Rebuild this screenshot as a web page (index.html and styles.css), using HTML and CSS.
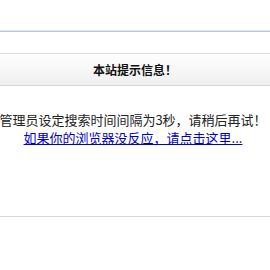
FILE: index.html
```html
<!DOCTYPE html>
<html lang="zh-CN">
<head>
  <meta charset="UTF-8" />
  <meta name="viewport" content="width=device-width, initial-scale=1.0" />
  <title>提示信息</title>
  <link rel="stylesheet" href="styles.css">
</head>
<body>
  <div class="topbar"></div>
  <div class="wrap">
    <div class="box">
      <h3 class="box-title">本站提示信息！</h3>
      <div class="box-body">
        <p class="msg"><span>管理员设定搜索时间间隔为3秒，请稍后再试！</span></p>
        <p class="msg"><a href="#">如果你的浏览器没反应，请点击这里...</a></p>
      </div>
    </div>
  </div>
  <div class="footer"></div>
</body>
</html>
```

FILE: styles.css
```css
body {
  margin: 0;
  font-family: "Noto Sans CJK SC", "Noto Sans", sans-serif;
  font-size: 13px;
  color: #000;
  background: #fff;
  overflow: hidden;
}
.topbar {
  height: 30px;
  border-bottom: 1px solid #dbe5ee;
}
.wrap {
  border-top: 1px solid #b8cadb;
  padding-top: 21px;
}
.box-title {
  margin: 0;
  height: 31px;
  line-height: 31px;
  border-top: 1px solid #dcdcdc;
  border-bottom: 1px solid #d6d6d6;
  background: linear-gradient(#ffffff, #efefef);
  text-align: center;
  font-size: 12px;
  font-weight: bold;
  color: #111;
}
.box-body {
  padding: 25px 0 0;
  height: 105px;
}
.msg {
  margin: 0;
  display: flex;
  justify-content: center;
  white-space: nowrap;
  line-height: 18px;
  color: #222;
}
.msg span {
  margin-left: -4px;
}
.msg a {
  color: #0000cc;
  text-decoration: underline;
  margin-left: -4px;
}
.footer {
  border-top: 1px solid #d9d9d9;
}
```
